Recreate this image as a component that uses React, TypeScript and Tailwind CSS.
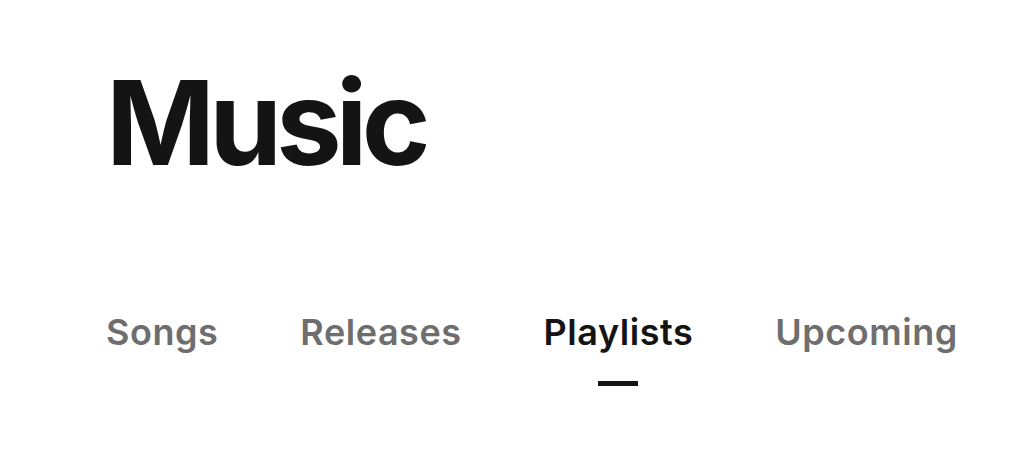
import React, { useState } from 'react';

const tabs = ['Songs', 'Releases', 'Playlists', 'Upcoming'];

export default function App() {
    const [active, setActive] = useState('Playlists');

    return (
        <div className="min-h-screen bg-white pl-[106px] pt-[64px] font-['Inter','Liberation_Sans',sans-serif]">
            {/* Page title */}
            <h1 className="text-[117px] font-bold leading-none tracking-[-0.05em] text-[#141414]">Music</h1>

            {/* Tabs */}
            <nav className="mt-[133px] flex gap-[82px]">
                {tabs.map((tab) => (
                    <button
                        key={tab}
                        onClick={() => setActive(tab)}
                        className="flex flex-col items-center"
                    >
                        <span
                            className={
                                tab === active
                                    ? 'text-[36px] font-semibold leading-none tracking-[0.015em] text-[#141414]'
                                    : 'text-[36px] font-semibold leading-none tracking-[0.015em] text-[#6e6e6e]'
                            }
                        >
                            {tab}
                        </span>
                        <span className={tab === active ? 'mt-[31px] h-[5px] w-10 bg-[#141414]' : 'mt-[31px] h-[5px] w-10 bg-transparent'} />
                    </button>
                ))}
            </nav>
        </div>
    );
}
